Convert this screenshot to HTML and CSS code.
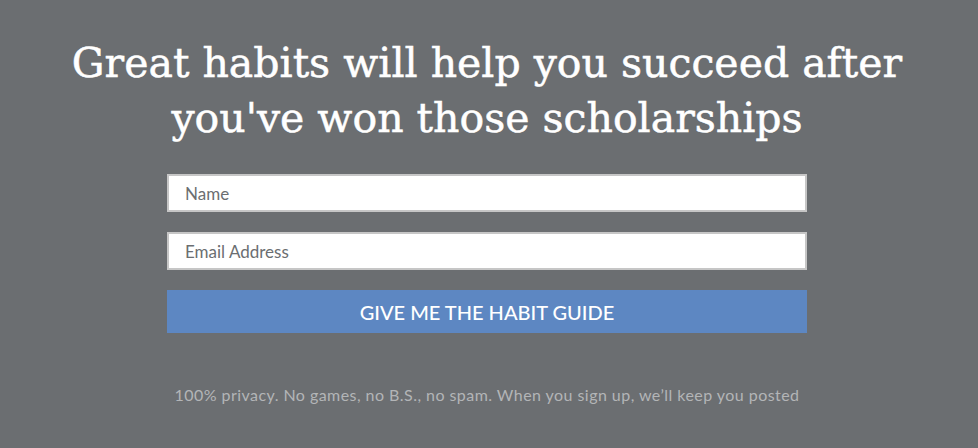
FILE: index.html
```html
<!DOCTYPE html>
<html>
<head>
<meta charset="utf-8">
<link rel="stylesheet" href="styles.css">
</head>
<body>
<section class="optin">
  <h1 class="title">Great habits will help you succeed after you've won those scholarships</h1>
  <form class="form">
    <input class="field" type="text" placeholder="Name">
    <input class="field" type="email" placeholder="Email Address">
    <button class="submit" type="button">GIVE ME THE HABIT GUIDE</button>
  </form>
  <p class="note">100% privacy. No games, no B.S., no spam. When you sign up, we’ll keep you posted</p>
</section>
</body>
</html>
```
FILE: styles.css
```css
html, body {
  margin: 0;
  padding: 0;
  background: #6b6e71;
}
.optin {
  width: 978px;
  height: 448px;
  display: flex;
  flex-direction: column;
  align-items: center;
  box-sizing: border-box;
  padding-top: 36px;
  padding-right: 4px;
}
.title {
  margin: 0;
  width: 880px;
  text-align: center;
  font-family: "DejaVu Serif", serif;
  font-weight: normal;
  font-size: 41px;
  line-height: 55px;
  color: #ffffff;
  -webkit-text-stroke: 0.5px #ffffff;
}
.form {
  margin-top: 28px;
  width: 640px;
  display: flex;
  flex-direction: column;
  gap: 20px;
}
.field {
  box-sizing: border-box;
  height: 38px;
  width: 100%;
  border: 2px solid #c6c6c6;
  background: #fff;
  padding: 0 16px;
  font-family: Lato, sans-serif;
  font-size: 17px;
  color: #555;
  outline: none;
}
.field::placeholder {
  color: #6b6e71;
}
.submit {
  height: 43px;
  border: none;
  background: #5d87c2;
  color: #fff;
  font-family: Lato, sans-serif;
  font-size: 20px;
  font-weight: 500;
}
.note {
  margin: 52px 0 0;
  font-family: Lato, sans-serif;
  font-size: 16px;
  letter-spacing: 0.45px;
  color: #b3b5b7;
}
```
